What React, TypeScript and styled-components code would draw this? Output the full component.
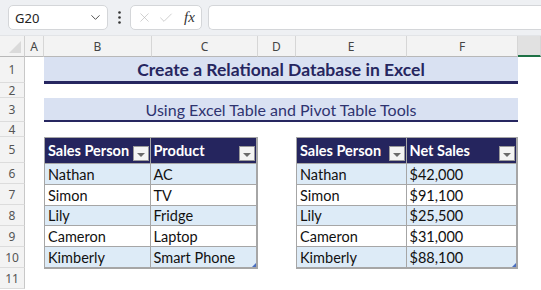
import styled, { createGlobalStyle } from 'styled-components';
import { ChevronDown, X, Check } from 'lucide-react';

const GlobalStyle = createGlobalStyle`
  body {
    margin: 0;
    background: #ffffff;
    overflow: hidden;
    font-family: "Lato", "Liberation Sans", sans-serif;
  }
  * { box-sizing: border-box; }
`

const Toolbar = styled.div`
  height: 36px;
  background: #eef0f3;
  display: flex;
  align-items: flex-start;
  padding: 5px 0 0 8px;
  border-bottom: 1px solid #e2e4e7;
`

const NameBox = styled.div`
  width: 100px;
  height: 25px;
  background: #fff;
  border: 1px solid #d4d6d9;
  border-radius: 5px;
  display: flex;
  align-items: center;
  justify-content: space-between;
  padding: 0 4px 0 6px;
  font-family: "Noto Sans", "Liberation Sans", sans-serif;
  font-size: 13px;
  color: #222;
`

const Dots = styled.div`
  width: 22px;
  height: 25px;
  display: flex;
  align-items: center;
  justify-content: center;
`

const FormulaButtons = styled.div`
  width: 72px;
  height: 25px;
  background: #fff;
  border: 1px solid #d4d6d9;
  border-radius: 5px;
  display: flex;
  align-items: center;
  padding: 0 4px 0 6px;
  gap: 6px;
`

const Fx = styled.span`
  font-family: "Liberation Serif", serif;
  font-style: italic;
  font-size: 15px;
  color: #333;
  margin-left: 4px;
`

const FormulaInput = styled.div`
  flex: 1;
  height: 25px;
  margin-left: 6px;
  background: #fff;
  border: 1px solid #d4d6d9;
  border-right: none;
  border-radius: 5px 0 0 5px;
`

const Sheet = styled.div`
  display: grid;
  grid-template-columns: 25px 19px 108px 106px 38px 111px 111px 1fr;
  grid-template-rows: 21px 26px 15px 24px 15px 26px repeat(6, 21px);
`

const Corner = styled.div`
  grid-column: 1;
  grid-row: 1;
  background: #f3f3f3;
  border-right: 1px solid #d0d0d0;
  border-bottom: 1px solid #b8b8b8;
  position: relative;
  &::after {
    content: '';
    position: absolute;
    right: 3px;
    bottom: 3px;
    border-left: 12px solid transparent;
    border-bottom: 12px solid #dadada;
  }
`

type ColProps = { $col: number; $active?: boolean };

const ColHeader = styled.div<ColProps>`
  grid-column: ${(p: ColProps) => p.$col};
  grid-row: 1;
  background: ${(p: ColProps) => (p.$active ? '#e1e1e1' : '#f3f3f3')};
  border-right: 1px solid #d6d6d6;
  border-bottom: ${(p: ColProps) => (p.$active ? '2px solid #1e7145' : '1px solid #b8b8b8')};
  display: flex;
  align-items: center;
  justify-content: center;
  font-family: "Noto Sans", "Liberation Sans", sans-serif;
  font-size: 12px;
  color: #444;
`

type RowProps = { $row: number };

const RowHeader = styled.div<RowProps>`
  grid-column: 1;
  grid-row: ${(p: RowProps) => p.$row};
  background: #f3f3f3;
  border-right: 1px solid #c8c8c8;
  border-bottom: 1px solid #dcdcdc;
  display: flex;
  align-items: center;
  justify-content: center;
  font-family: "Noto Sans", "Liberation Sans", sans-serif;
  font-size: 12px;
  color: #555;
`

type BandProps = { $row: number; $bold?: boolean; $line: number };

const Band = styled.div<BandProps>`
  grid-column: 3 / 8;
  grid-row: ${(p: BandProps) => p.$row};
  background: #d9e1f2;
  border-bottom: ${(p: BandProps) => p.$line}px solid #262660;
  margin-bottom: ${(p: BandProps) => (p.$bold ? '-1px' : '0')};
  display: flex;
  align-items: center;
  justify-content: center;
  color: ${(p: BandProps) => (p.$bold ? '#262660' : '#2f3470')};
  font-weight: ${(p: BandProps) => (p.$bold ? 700 : 400)};
  font-size: ${(p: BandProps) => (p.$bold ? '17.5px' : '16px')};
`

type TableProps = { $col: number };

const Table = styled.div<TableProps>`
  grid-column: ${(p: TableProps) => `${p.$col} / ${p.$col + 2}`};
  grid-row: 6 / 12;
  display: grid;
  grid-template-columns: 1fr 1fr;
  grid-template-rows: 25px repeat(5, 1fr);
  border: 1px solid #a6a6a6;
  border-right-width: 2px;
  border-bottom-width: 2px;
  position: relative;
  margin-bottom: -1px;
`

const HeadCell = styled.div`
  background: #25255e;
  color: #fff;
  font-weight: 700;
  font-size: 14.5px;
  display: flex;
  align-items: center;
  justify-content: space-between;
  padding: 0 1px 0 3px;
  border-right: 1px solid #a6a6a6;
  &:nth-child(2) { border-right: none; }
`

const FilterButton = styled.div`
  width: 16px;
  height: 15px;
  align-self: flex-end;
  margin-bottom: 2px;
  background: #f4f4f4;
  border: 1px solid #9a9a9a;
  display: flex;
  align-items: center;
  justify-content: center;
  &::after {
    content: '';
    border-left: 4px solid transparent;
    border-right: 4px solid transparent;
    border-top: 4px solid #6b6b6b;
    margin-top: 2px;
  }
`

type CellProps = { $stripe: boolean; $last: boolean };

const Cell = styled.div<CellProps>`
  background: ${(p: CellProps) => (p.$stripe ? '#ddebf7' : '#ffffff')};
  border-top: 1px solid #a6a6a6;
  border-right: ${(p: CellProps) => (p.$last ? 'none' : '1px solid #a6a6a6')};
  display: flex;
  align-items: center;
  padding: 1px 0 0 3px;
  font-size: 14.5px;
  color: #111;
`

const ResizeHandle = styled.div`
  position: absolute;
  right: 0;
  bottom: 0;
  border-left: 4px solid transparent;
  border-bottom: 4px solid #4a6fc0;
`

const rowNumbers = [1, 2, 3, 4, 5, 6, 7, 8, 9, 10, 11];
const columns = ['A', 'B', 'C', 'D', 'E', 'F', ''];

const productTable = {
  heads: ['Sales Person', 'Product'],
  rows: [
    ['Nathan', 'AC'],
    ['Simon', 'TV'],
    ['Lily', 'Fridge'],
    ['Cameron', 'Laptop'],
    ['Kimberly', 'Smart Phone'],
  ],
};

const salesTable = {
  heads: ['Sales Person', 'Net Sales'],
  rows: [
    ['Nathan', '$42,000'],
    ['Simon', '$91,100'],
    ['Lily', '$25,500'],
    ['Cameron', '$31,000'],
    ['Kimberly', '$88,100'],
  ],
};

type DataTable = { heads: string[]; rows: string[][] };

function ExcelTable({ col, data }: { col: number; data: DataTable }) {
  return (
    <Table $col={col}>
      {data.heads.map(h => (
        <HeadCell key={h}>
          <span>{h}</span>
          <FilterButton />
        </HeadCell>
      ))}
      {data.rows.map((r, i) =>
        r.map((v, j) => (
          <Cell key={`${i}-${j}`} $stripe={i % 2 === 0} $last={j === 1}>
            {v}
          </Cell>
        ))
      )}
      <ResizeHandle />
    </Table>
  );
}

function App() {
  return (
    <>
      <GlobalStyle />
      <Toolbar>
        <NameBox>
          <span>G20</span>
          <ChevronDown size={15} strokeWidth={1.5} color="#444" />
        </NameBox>
        <Dots>
          <svg width="3" height="13" viewBox="0 0 3 13">
            <circle cx="1.5" cy="1.5" r="1.3" fill="#333" />
            <circle cx="1.5" cy="6.5" r="1.3" fill="#333" />
            <circle cx="1.5" cy="11.5" r="1.3" fill="#333" />
          </svg>
        </Dots>
        <FormulaButtons>
          <X size={15} strokeWidth={1} color="#b5b5b5" />
          <Check size={16} strokeWidth={1} color="#b5b5b5" />
          <Fx>fx</Fx>
        </FormulaButtons>
        <FormulaInput />
      </Toolbar>
      <Sheet>
        <Corner />
        {columns.map((c, i) => (
          <ColHeader key={i} $col={i + 2} $active={c === ''}>
            {c}
          </ColHeader>
        ))}
        {rowNumbers.map(n => (
          <RowHeader key={n} $row={n + 1}>
            {n}
          </RowHeader>
        ))}
        <Band $row={2} $bold $line={3}>
          Create a Relational Database in Excel
        </Band>
        <Band $row={4} $line={2}>
          Using Excel Table and Pivot Table Tools
        </Band>
        <ExcelTable col={3} data={productTable} />
        <ExcelTable col={6} data={salesTable} />
      </Sheet>
    </>
  );
}

export default App;
